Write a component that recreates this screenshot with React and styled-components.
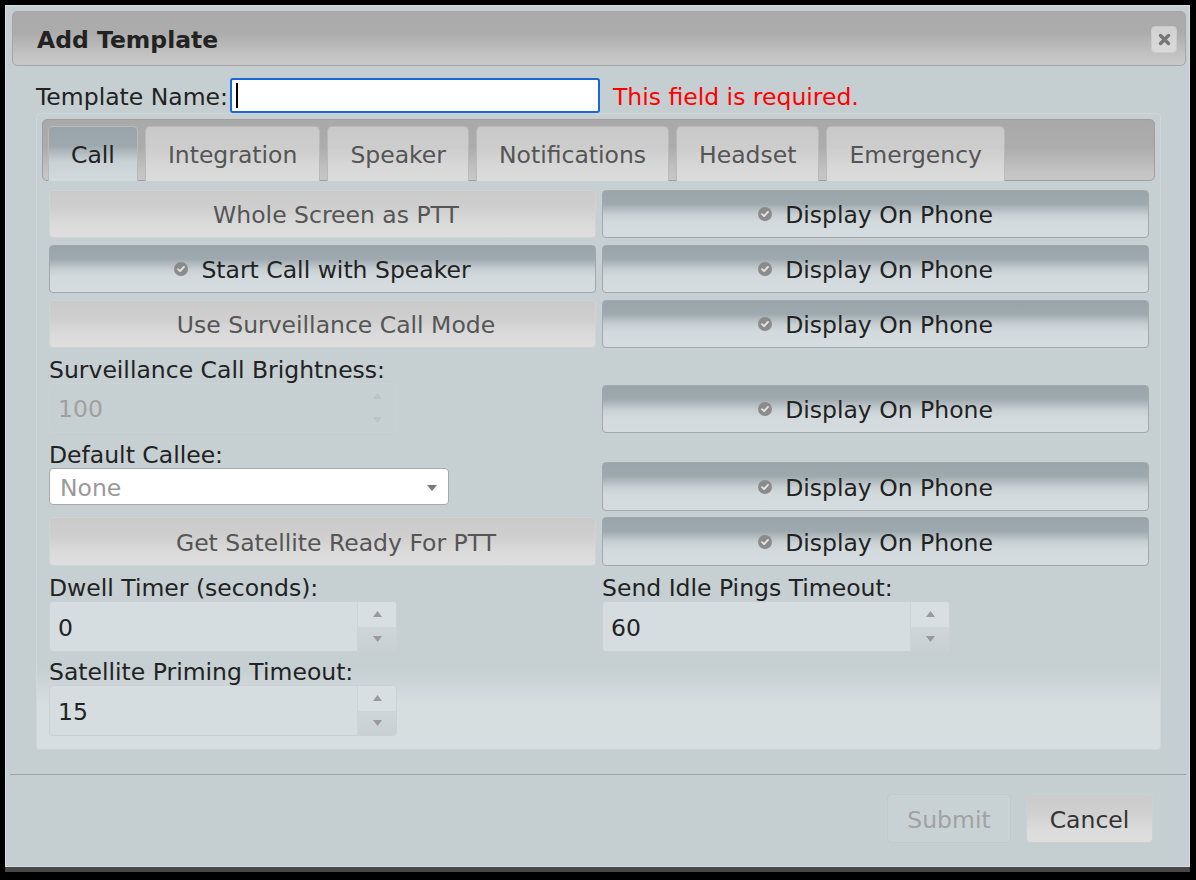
import React from "react";
import styled, { createGlobalStyle, css } from "styled-components";

const GlobalStyle = createGlobalStyle`
  html, body { margin: 0; padding: 0; background: #000; }
  body { font-family: "DejaVu Sans", Verdana, sans-serif; color: #222; }
  #root { padding: 5px; }
  * { box-sizing: border-box; }
`;

const Dialog = styled.div`
  width: 1185px;
  height: 862px;
  border: 1px solid #d6dddf;
  background: #c5cfd1;
  box-shadow: 0 5px 0 #474747;
  display: flex;
  flex-direction: column;
`;

const TitleBar = styled.div`
  margin: 5px 3px 0 6px;
  height: 55px;
  border: 1px solid #a6a6a6;
  border-radius: 5px;
  background: linear-gradient(#aaaaaa 0%, #acacac 40%, #c2c2c2 80%, #c8c8c8 100%);
  display: flex;
  align-items: center;
  justify-content: space-between;
  padding: 2px 8px 0 24px;
`;

const Title = styled.span`
  font-weight: bold;
  font-size: 23.5px;
  color: #222;
`;

const CloseButton = styled.div`
  width: 26px;
  height: 27px;
  margin-top: -1px;
  border: 1px solid #cacaca;
  border-radius: 4px;
  background: linear-gradient(#d2d2d2, #dadada);
  display: flex;
  align-items: center;
  justify-content: center;
`;

const Body = styled.div`
  padding: 12px 28px 0 30px;
`;

const NameRow = styled.div`
  display: flex;
  align-items: center;
  height: 35px;
  font-size: 23.5px;
`;

const NameLabel = styled.span`
  color: #222;
  margin-right: 2px;
  padding-top: 2px;
`;

const NameField = styled.div`
  width: 370px;
  height: 35px;
  border: 2px solid #1a66d4;
  border-radius: 3px;
  background: #fff;
  display: flex;
  align-items: center;
  padding-left: 4px;
`;

const Caret = styled.span`
  width: 2px;
  height: 25px;
  background: #000;
`;

const ErrorText = styled.span`
  color: #ff0000;
  margin-left: 13px;
  padding-top: 2px;
`;

const TabsPanel = styled.div`
  width: 1125px;
  height: 637px;
  border: 1px solid #d0d7da;
  border-radius: 4px;
  padding: 5px;
  background: linear-gradient(
    #c6cfd2 0px,
    #c6cfd2 555px,
    #d7dee0 590px,
    #d7dee0 100%
  );
`;

const TabHeader = styled.div`
  height: 62px;
  border: 1px solid #9f9f9f;
  border-radius: 5px;
  background: linear-gradient(#a9a9a9 0%, #acacac 45%, #c3c3c3 85%, #c6c6c6 100%);
  padding: 6px 5px 0 5px;
  display: flex;
  align-items: flex-end;
  gap: 7px;
`;

const Tab = styled.div`
  height: 55px;
  margin-bottom: -1px;
  padding: 2px 22px 0;
  display: flex;
  align-items: center;
  font-size: 23.5px;
  border: 1px solid #b9b9b9;
  border-bottom: none;
  border-radius: 5px 5px 0 0;
  ${(p) =>
    p.$active
      ? css`
          color: #222;
          background: linear-gradient(#99a4aa 0%, #9ea9af 35%, #cad2d5 65%, #d3dadd 100%);
        `
      : css`
          color: #555;
          background: linear-gradient(#c9c9c9 0%, #cdcdcd 40%, #d8d8d8 75%, #dbdbdb 100%);
        `}
`;

const TabContent = styled.div`
  padding: 9px 8px 0 7px;
`;

const Row = styled.div`
  display: grid;
  grid-template-columns: 547px 547px;
  column-gap: 6px;
  align-items: start;
  margin-top: ${(p) => p.$mt || 0}px;
`;

const Toggle = styled.div`
  height: ${(p) => p.$h || 48}px;
  margin-top: ${(p) => p.$offset || 0}px;
  padding-top: 2px;
  border-radius: 4px;
  display: flex;
  align-items: center;
  justify-content: center;
  gap: 13px;
  font-size: 23.5px;
  ${(p) =>
    p.$on
      ? css`
          color: #222;
          border: 1px solid #a2a8ab;
          background: linear-gradient(#9aa5ab 0%, #9ea9af 28%, #c8d0d3 52%, #d3dadd 68%, #d5dcdf 100%);
        `
      : css`
          color: #555;
          border: 1px solid #d0d3d4;
          background: linear-gradient(#cacaca 0%, #cfcfcf 40%, #dadada 70%, #dedede 100%);
        `}
`;

const CheckSlot = styled.span`
  display: flex;
  margin-top: -2px;
  visibility: ${(p) => (p.$on ? "visible" : "hidden")};
`;

const Field = styled.div`
  display: flex;
  flex-direction: column;
`;

const FieldLabel = styled.div`
  font-size: 23.5px;
  line-height: 25px;
  color: #222;
`;

const Spinner = styled.div`
  width: 348px;
  height: ${(p) => p.$h || 51}px;
  display: flex;
  border-radius: 4px;
  overflow: hidden;
  ${(p) =>
    p.$disabled
      ? css`
          border: 1px solid #cad2d4;
          background: transparent;
          color: #a0a0a0;
        `
      : css`
          border: 1px solid #cad1d4;
          background: #d6dde0;
          color: #222;
        `}
`;

const SpinValue = styled.div`
  flex: 1;
  display: flex;
  align-items: center;
  padding: 2px 0 0 8px;
  font-size: 23.5px;
`;

const SpinButtons = styled.div`
  width: 39px;
  display: flex;
  flex-direction: column;
  border-left: 1px solid ${(p) => (p.$disabled ? "transparent" : "#cdd3d6")};
`;

const SpinButton = styled.div`
  flex: 1;
  display: flex;
  align-items: center;
  justify-content: center;
  background: ${(p) =>
    p.$disabled ? "transparent" : p.$down ? "linear-gradient(#cfd6d9, #c9d0d3)" : "#d8dfe2"};
`;

const Select = styled.div`
  width: 400px;
  height: 37px;
  border: 1px solid #a9a9a9;
  border-radius: 4px;
  background: #fff;
  display: flex;
  align-items: center;
  justify-content: space-between;
  padding: 2px 11px 0 10px;
  font-size: 23.5px;
  color: #999;
`;

const Separator = styled.div`
  margin: 24px 3px 0 4px;
  height: 1px;
  background: #9ea4a6;
`;

const Footer = styled.div`
  display: flex;
  justify-content: flex-end;
  gap: 15px;
  padding: 19px 36px 0 0;
`;

const FooterButton = styled.div`
  height: 49px;
  width: ${(p) => p.$w}px;
  padding-top: 2px;
  border-radius: 4px;
  display: flex;
  align-items: center;
  justify-content: center;
  font-size: 23.5px;
  ${(p) =>
    p.$disabled
      ? css`
          color: #a2a2a2;
          border: 1px solid #c0c9cb;
          background: #c8d1d3;
        `
      : css`
          color: #333;
          border: 1px solid #cfcfcf;
          background: linear-gradient(#cbcbcb 0%, #d0d0d0 40%, #dcdcdc 75%, #dedede 100%);
        `}
`;

const CheckIcon = () => (
  <svg width="14" height="14" viewBox="0 0 14 14">
    <circle cx="7" cy="7" r="7" fill="#8b8b8b" />
    <path d="M4 7.2 L6.1 9.2 L10 4.9" fill="none" stroke="#e6e6e6" strokeWidth="1.8" strokeLinecap="round" strokeLinejoin="round" />
  </svg>
);

const CloseIcon = () => (
  <svg width="13" height="13" viewBox="0 0 13 13">
    <path d="M2.5 2.5 L10.5 10.5 M10.5 2.5 L2.5 10.5" stroke="#767676" strokeWidth="3.4" strokeLinecap="round" />
  </svg>
);

const Arrow = ({ up, color = "#9a9a9a", w = 9, h = 6 }) => (
  <svg width={w} height={h} viewBox={`0 0 ${w} ${h}`}>
    <polygon points={up ? `0,${h} ${w},${h} ${w / 2},0` : `0,0 ${w},0 ${w / 2},${h}`} fill={color} />
  </svg>
);

const ToggleButton = ({ on, children, offset, h }) => (
  <Toggle $on={on} $offset={offset} $h={h}>
    <CheckSlot $on={on}>
      <CheckIcon />
    </CheckSlot>
    <span>{children}</span>
  </Toggle>
);

const NumberInput = ({ value, disabled, h }) => (
  <Spinner $disabled={disabled} $h={h}>
    <SpinValue>{value}</SpinValue>
    <SpinButtons $disabled={disabled}>
      <SpinButton $disabled={disabled}>
        <Arrow up color={disabled ? "#bcc4c7" : "#9a9a9a"} />
      </SpinButton>
      <SpinButton $down $disabled={disabled}>
        <Arrow color={disabled ? "#bcc4c7" : "#9a9a9a"} />
      </SpinButton>
    </SpinButtons>
  </Spinner>
);

const tabs = ["Call", "Integration", "Speaker", "Notifications", "Headset", "Emergency"];

export default function App() {
  return (
    <>
      <GlobalStyle />
      <Dialog>
        <TitleBar>
          <Title>Add Template</Title>
          <CloseButton>
            <CloseIcon />
          </CloseButton>
        </TitleBar>
        <Body>
          <NameRow>
            <NameLabel>Template Name:</NameLabel>
            <NameField>
              <Caret />
            </NameField>
            <ErrorText>This field is required.</ErrorText>
          </NameRow>
          <TabsPanel>
            <TabHeader>
              {tabs.map((t, i) => (
                <Tab key={t} $active={i === 0}>
                  {t}
                </Tab>
              ))}
            </TabHeader>
            <TabContent>
              <Row>
                <ToggleButton>Whole Screen as PTT</ToggleButton>
                <ToggleButton on>Display On Phone</ToggleButton>
              </Row>
              <Row $mt={7}>
                <ToggleButton on>Start Call with Speaker</ToggleButton>
                <ToggleButton on>Display On Phone</ToggleButton>
              </Row>
              <Row $mt={7}>
                <ToggleButton>Use Surveillance Call Mode</ToggleButton>
                <ToggleButton on>Display On Phone</ToggleButton>
              </Row>
              <Row $mt={10}>
                <Field>
                  <FieldLabel>Surveillance Call Brightness:</FieldLabel>
                  <NumberInput value="100" disabled h={50} />
                </Field>
                <ToggleButton on offset={27}>
                  Display On Phone
                </ToggleButton>
              </Row>
              <Row $mt={10}>
                <Field>
                  <FieldLabel>Default Callee:</FieldLabel>
                  <Select>
                    <span>None</span>
                    <Arrow color="#777" w={10} h={6} />
                  </Select>
                </Field>
                <ToggleButton on offset={19} h={49}>
                  Display On Phone
                </ToggleButton>
              </Row>
              <Row $mt={6}>
                <ToggleButton h={49}>Get Satellite Ready For PTT</ToggleButton>
                <ToggleButton on h={49}>
                  Display On Phone
                </ToggleButton>
              </Row>
              <Row $mt={10}>
                <Field>
                  <FieldLabel>Dwell Timer (seconds):</FieldLabel>
                  <NumberInput value="0" />
                </Field>
                <Field>
                  <FieldLabel>Send Idle Pings Timeout:</FieldLabel>
                  <NumberInput value="60" />
                </Field>
              </Row>
              <Row $mt={8}>
                <Field>
                  <FieldLabel>Satellite Priming Timeout:</FieldLabel>
                  <NumberInput value="15" h={51} />
                </Field>
              </Row>
            </TabContent>
          </TabsPanel>
        </Body>
        <Separator />
        <Footer>
          <FooterButton $disabled $w={124}>
            Submit
          </FooterButton>
          <FooterButton $w={127}>Cancel</FooterButton>
        </Footer>
      </Dialog>
    </>
  );
}
